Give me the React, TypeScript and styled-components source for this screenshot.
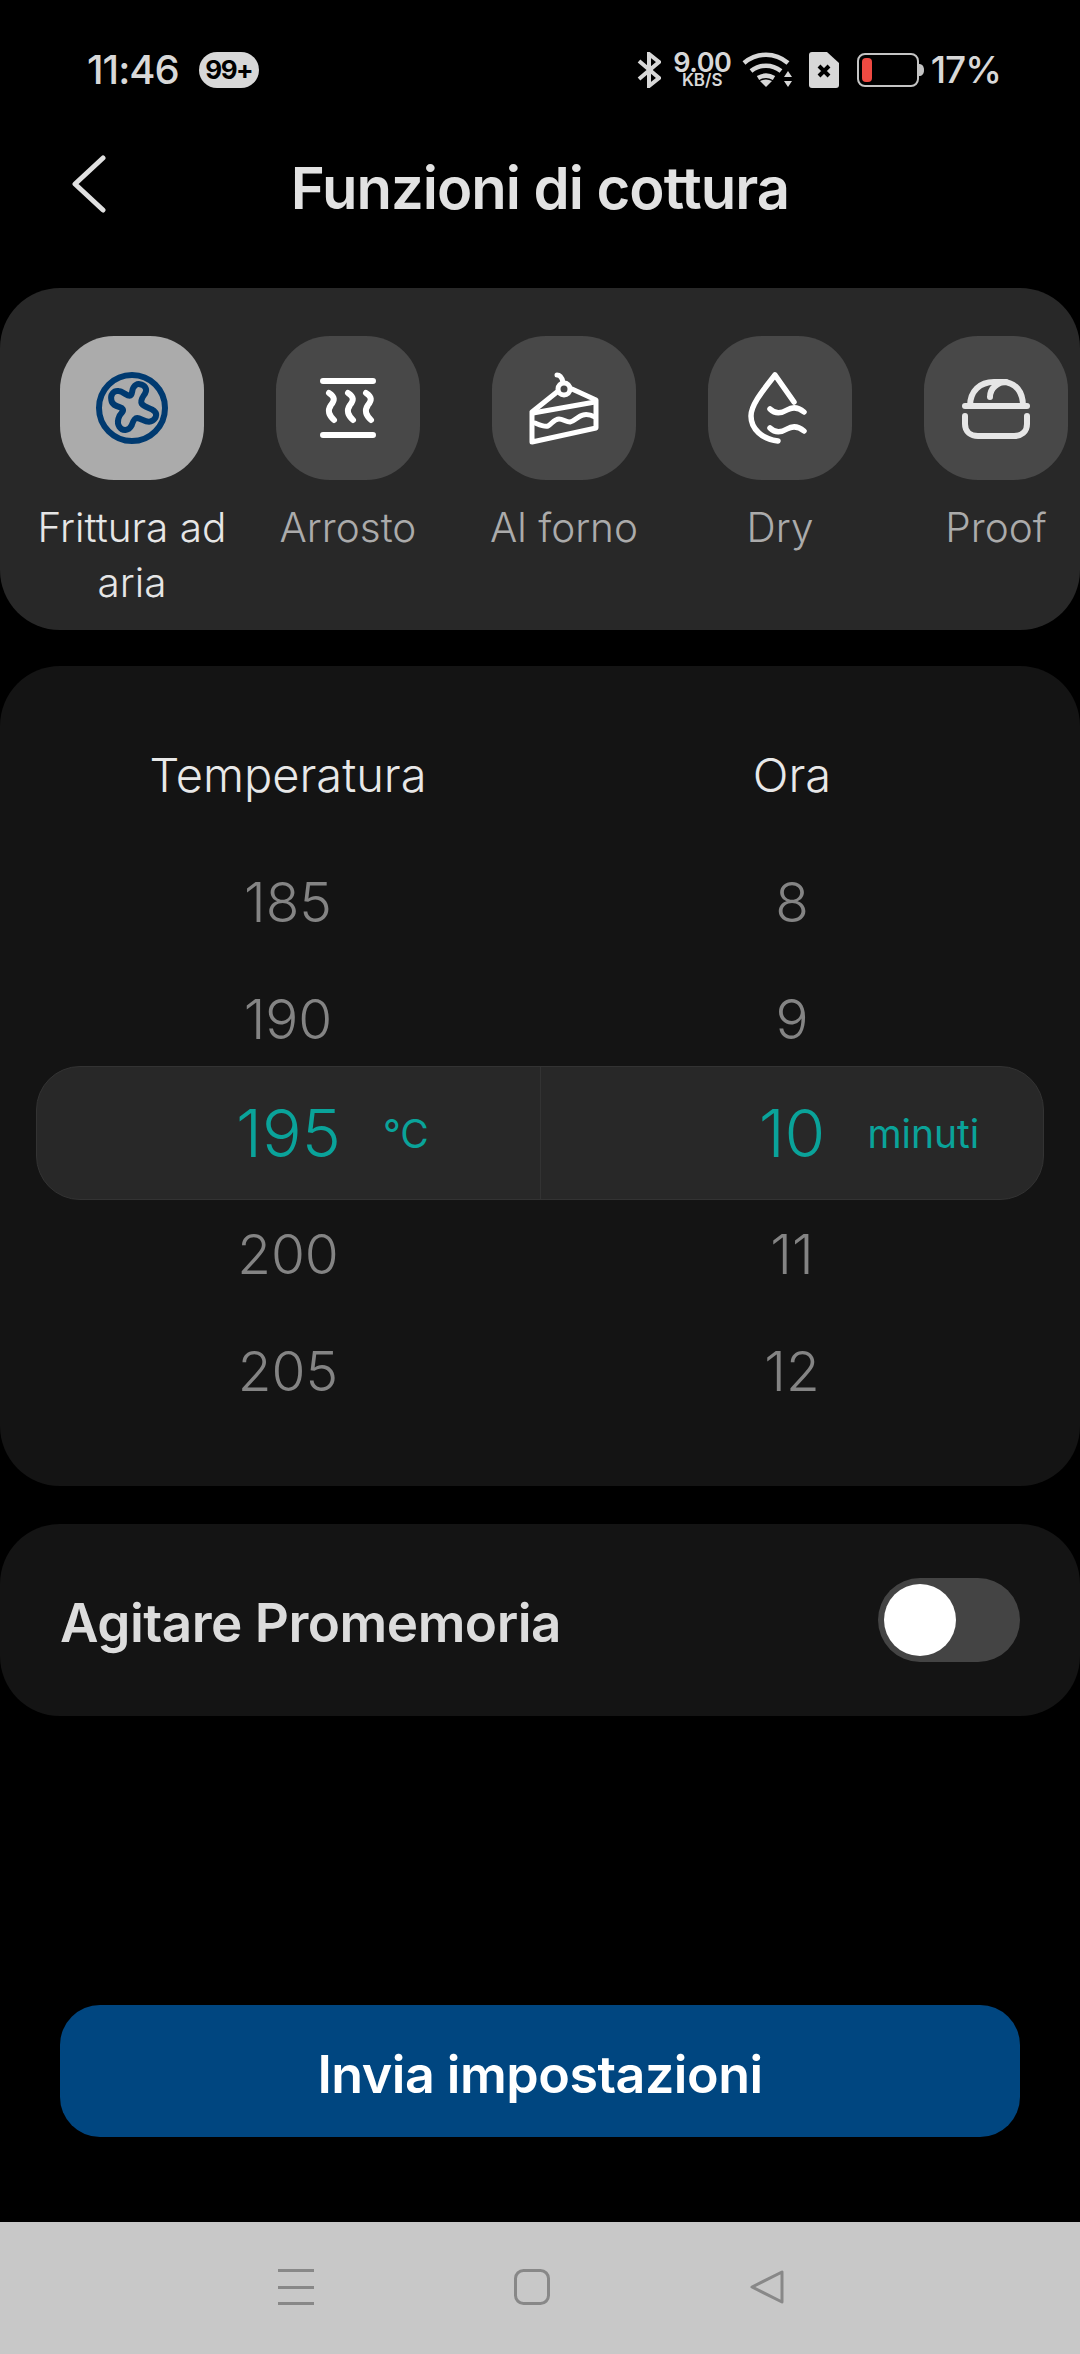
import React from "react";
import styled, { createGlobalStyle } from "styled-components";

const GlobalStyle = createGlobalStyle`
  html, body {
    margin: 0;
    padding: 0;
    background: #000;
    overflow: hidden;
  }
  * {
    box-sizing: border-box;
  }
`;

const Page = styled.div`
  width: 1080px;
  height: 2354px;
  display: flex;
  flex-direction: column;
  background: #000;
  font-family: Inter, "Liberation Sans", sans-serif;
`;

const StatusBar = styled.div`
  height: 140px;
  padding: 52px 79px 0 87px;
  display: flex;
  align-items: flex-start;
  color: #d8d8d8;
`;

const Time = styled.span`
  font-size: 40px;
  line-height: 36px;
  font-weight: 500;
  letter-spacing: -1px;
`;

const CountBadge = styled.span`
  margin-left: 20px;
  width: 60px;
  height: 36px;
  border-radius: 18px;
  background: #d8d8d8;
  color: #000;
  font-size: 26px;
  line-height: 36px;
  font-weight: 700;
  text-align: center;
  letter-spacing: -1.5px;
`;

const StatusRight = styled.div`
  margin-left: auto;
  display: flex;
  align-items: flex-start;
`;

const Speed = styled.div`
  margin-left: 12px;
  width: 59px;
  display: flex;
  flex-direction: column;
  align-items: center;
  font-weight: 600;
`;

const SpeedValue = styled.span`
  font-size: 27px;
  line-height: 21px;
  letter-spacing: -0.5px;
`;

const SpeedUnit = styled.span`
  font-size: 17px;
  line-height: 15px;
`;

const BatteryLabel = styled.span`
  margin-left: 7px;
  font-size: 37px;
  line-height: 36px;
  font-weight: 500;
  letter-spacing: -1px;
`;

const Header = styled.div`
  height: 98px;
  padding-bottom: 2px;
  position: relative;
  display: flex;
  align-items: center;
  justify-content: center;
`;

const BackButton = styled.svg`
  position: absolute;
  left: 70px;
  top: 15px;
`;

const Title = styled.h1`
  margin: 0;
  font-size: 58px;
  font-weight: 600;
  color: #e2e2e2;
  letter-spacing: -1px;
`;

const Card = styled.div<{ $bg: string }>`
  background: ${(p) => p.$bg};
  border-radius: 60px;
  overflow: hidden;
`;

const ModesCard = styled(Card)`
  margin-top: 50px;
  height: 342px;
  padding: 48px 0 0 24px;
  display: flex;
`;

const Mode = styled.div`
  flex: 0 0 216px;
  display: flex;
  flex-direction: column;
  align-items: center;
`;

const ModeTile = styled.div<{ $active?: boolean }>`
  width: 144px;
  height: 144px;
  border-radius: 54px;
  background: ${(p) => (p.$active ? "#ababab" : "#484848")};
  display: flex;
  align-items: center;
  justify-content: center;
`;

const ModeLabel = styled.div<{ $active?: boolean }>`
  margin-top: 20px;
  width: 200px;
  text-align: center;
  font-size: 40.5px;
  line-height: 55px;
  font-weight: 300;
  color: ${(p) => (p.$active ? "#e6e6e6" : "#ababab")};
`;

const WheelCard = styled(Card)`
  margin-top: 36px;
  height: 820px;
  padding: 70px 36px 0;
`;

const Columns = styled.div`
  display: grid;
  grid-template-columns: 1fr 1fr;
`;

const TitleRow = styled(Columns)`
  margin-bottom: 29px;
`;

const ColumnTitle = styled.div`
  text-align: center;
  font-size: 47px;
  line-height: 78px;
  font-weight: 300;
  color: #e8e8e8;
`;

const WheelRow = styled(Columns)`
  height: 117px;
  align-items: center;
  text-align: center;
  font-size: 55px;
  font-weight: 300;
  color: #848484;
`;

const SelectedRow = styled(Columns)`
  height: 134px;
  margin: -11px 0 -5px;
  background: #282828;
  border: 1px solid #333;
  border-radius: 44px;
  color: #0aa39a;
`;

const SelectedCell = styled.div<{ $divider?: boolean }>`
  display: grid;
  grid-template-columns: 1fr auto 1fr;
  align-items: center;
  border-left: ${(p) => (p.$divider ? "1px solid #333" : "none")};
`;

const SelectedValue = styled.span`
  grid-column: 2;
  font-size: 66px;
  font-weight: 300;
`;

const Unit = styled.span`
  padding-left: 42px;
  font-size: 39px;
  font-weight: 400;
  white-space: nowrap;
`;

const ReminderCard = styled(Card)`
  margin-top: 38px;
  height: 192px;
  padding: 0 60px;
  display: flex;
  align-items: center;
  justify-content: space-between;
`;

const ReminderLabel = styled.span`
  padding-top: 6px;
  font-size: 53px;
  font-weight: 600;
  color: #dcdcdc;
  letter-spacing: -0.5px;
`;

const Toggle = styled.div`
  width: 142px;
  height: 84px;
  border-radius: 42px;
  background: #444;
  padding: 6px;
`;

const ToggleKnob = styled.div`
  width: 72px;
  height: 72px;
  border-radius: 50%;
  background: #fff;
`;

const SubmitButton = styled.button`
  margin: 289px 60px 0;
  height: 132px;
  padding: 7px 0 0;
  border: 0;
  border-radius: 40px;
  background: #004680;
  color: #fff;
  font-family: inherit;
  font-size: 52px;
  font-weight: 600;
  letter-spacing: -0.5px;
`;

const NavBar = styled.div`
  margin-top: auto;
  height: 132px;
  background: #c8c8c8;
  padding: 47px 0 0 278px;
  display: flex;
  align-items: flex-start;
`;

const NavSquare = styled.svg`
  margin-left: 200px;
`;

const NavBack = styled.svg`
  margin-left: 199px;
`;

const FanIcon = () => (
  <svg width="76" height="76" viewBox="0 0 76 76" fill="none" stroke="#003a70" strokeWidth="6" strokeLinejoin="round">
    <circle cx="38" cy="38" r="33" />
    <path
      transform="rotate(18 38 38)"
      d="M38 13C43 12 47 15 46 20C45 24 43 28 46 31C50 34 56 32 60 34C65 36 64 42 60 45C56 48 50 45 46 46C43 47 43 52 43 55C42 61 36 63 32 60C27 56 28 49 30 45C31 42 29 41 26 41C22 41 18 41 16 37C13 32 15 27 20 26C24 25 29 28 32 27C35 26 32 21 33 18C34 15 36 13 38 13Z"
    />
  </svg>
);

const RoastIcon = () => (
  <svg width="56" height="60" viewBox="0 0 56 60" fill="none" stroke="#fff" strokeWidth="6" strokeLinecap="round">
    <path d="M3 3h50M3 57h50" />
    <path d="M9 15c6 4 6 7 2 12-4 6-2 10 3 15M28 15c6 4 6 7 2 12-4 6-2 10 3 15M46 15c6 4 6 7 2 12-4 6-2 10 3 15" />
  </svg>
);

const CakeIcon = () => (
  <svg width="72" height="76" viewBox="28 20 72 76" fill="none" stroke="#fff" strokeWidth="5" strokeLinecap="round" strokeLinejoin="round">
    <path d="M32 62v30l64-14V50L72 39M57 42L32 62" />
    <path d="M33 63l62-11" />
    <path d="M35 73c5 2 9 4 13 3 4-2 6-7 11-7 4 0 7 3 11 3 5-1 8-6 13-7 4-1 8 0 12 2" />
    <circle cx="64" cy="39" r="6" />
    <path d="M57 25c3 0 5 3 6 7" />
  </svg>
);

const DryIcon = () => (
  <svg width="64" height="72" viewBox="0 0 64 72" fill="none" stroke="#fff" strokeWidth="5.5" strokeLinecap="round" strokeLinejoin="round">
    <path d="M30 69C14 67 3 57 3 44 3 32 17 16 27 3l19 27" />
    <path d="M22 37c6 6 12 4 17 1s11-3 17 2M22 56c6 6 12 4 17 1s11-3 17 2" />
  </svg>
);

const ProofIcon = () => (
  <svg width="68" height="62" viewBox="0 0 68 62" fill="none" stroke="#e6e6e6" strokeWidth="6" strokeLinecap="round" strokeLinejoin="round">
    <path d="M3 29h62" />
    <path d="M8 29C8 14 18 5 32 5h8c14 0 21 10 21 24" />
    <path d="M28 20c0-9 8-15 16-15" />
    <path d="M3 39v8c0 8 6 12 13 12h36c7 0 13-4 13-12v-8" />
  </svg>
);

const modes = [
  { label: "Frittura ad aria", icon: <FanIcon />, active: true },
  { label: "Arrosto", icon: <RoastIcon /> },
  { label: "Al forno", icon: <CakeIcon /> },
  { label: "Dry", icon: <DryIcon /> },
  { label: "Proof", icon: <ProofIcon /> },
];

const App = () => {
  return (
    <Page>
      <GlobalStyle />
      <StatusBar>
        <Time>11:46</Time>
        <CountBadge>99+</CountBadge>
        <StatusRight>
          <svg width="24" height="36" viewBox="0 0 24 36" fill="none" stroke="#d8d8d8" strokeWidth="4">
            <path d="M2 9l20 17-10 8V2l10 8L2 27" />
          </svg>
          <Speed>
            <SpeedValue>9.00</SpeedValue>
            <SpeedUnit>KB/S</SpeedUnit>
          </Speed>
          <svg width="52" height="36" viewBox="0 0 52 36" fill="none" stroke="#d8d8d8" strokeWidth="4.5" style={{ marginLeft: 10 }}>
            <path d="M2 11c13-11 31-11 44 0M9 19c9-7 21-7 30 0M16 26c5-3 11-3 16 0" />
            <path d="M24 35l-6-6c4-2 8-2 12 0z" fill="#d8d8d8" stroke="none" />
            <path d="M46 19l4 6h-8zM46 35l-4-6h8z" fill="#d8d8d8" stroke="none" />
          </svg>
          <svg width="30" height="36" viewBox="0 0 30 36" style={{ marginLeft: 15 }}>
            <path d="M3 0h15l12 11v22a3 3 0 0 1-3 3H3a3 3 0 0 1-3-3V3a3 3 0 0 1 3-3z" fill="#d8d8d8" />
            <path d="M10 14l10 10M20 14L10 24" stroke="#000" strokeWidth="4" />
          </svg>
          <svg width="67" height="36" viewBox="0 0 67 36" style={{ marginLeft: 18 }}>
            <rect x="1" y="2" width="60" height="32" rx="7" fill="none" stroke="#c4c4c4" strokeWidth="2" />
            <rect x="5" y="6" width="10" height="24" rx="4" fill="#ee4a42" />
            <path d="M62 12c3 0 5 2 5 6s-2 6-5 6z" fill="#c4c4c4" />
          </svg>
          <BatteryLabel>17%</BatteryLabel>
        </StatusRight>
      </StatusBar>

      <Header>
        <BackButton width="36" height="58" viewBox="0 0 36 58" fill="none" stroke="#e0e0e0" strokeWidth="5" strokeLinecap="round" strokeLinejoin="round">
          <path d="M33 3L5 29l28 26" />
        </BackButton>
        <Title>Funzioni di cottura</Title>
      </Header>

      <ModesCard $bg="#282828">
        {modes.map((m) => (
          <Mode key={m.label}>
            <ModeTile $active={m.active}>{m.icon}</ModeTile>
            <ModeLabel $active={m.active}>{m.label}</ModeLabel>
          </Mode>
        ))}
      </ModesCard>

      <WheelCard $bg="#141414">
        <TitleRow>
          <ColumnTitle>Temperatura</ColumnTitle>
          <ColumnTitle>Ora</ColumnTitle>
        </TitleRow>
        <WheelRow>
          <span>185</span>
          <span>8</span>
        </WheelRow>
        <WheelRow>
          <span>190</span>
          <span>9</span>
        </WheelRow>
        <SelectedRow>
          <SelectedCell>
            <SelectedValue>195</SelectedValue>
            <Unit>°C</Unit>
          </SelectedCell>
          <SelectedCell $divider>
            <SelectedValue>10</SelectedValue>
            <Unit>minuti</Unit>
          </SelectedCell>
        </SelectedRow>
        <WheelRow>
          <span>200</span>
          <span>11</span>
        </WheelRow>
        <WheelRow>
          <span>205</span>
          <span>12</span>
        </WheelRow>
      </WheelCard>

      <ReminderCard $bg="#141414">
        <ReminderLabel>Agitare Promemoria</ReminderLabel>
        <Toggle>
          <ToggleKnob />
        </Toggle>
      </ReminderCard>

      <SubmitButton>Invia impostazioni</SubmitButton>

      <NavBar>
        <svg width="36" height="38" viewBox="0 0 36 38" fill="#888">
          <rect y="0" width="36" height="3" />
          <rect y="17" width="36" height="3" />
          <rect y="33" width="36" height="3" />
        </svg>
        <NavSquare width="36" height="36" viewBox="0 0 36 36" fill="none" stroke="#888" strokeWidth="3">
          <rect x="1.5" y="1.5" width="33" height="33" rx="8" />
        </NavSquare>
        <NavBack width="36" height="36" viewBox="0 0 36 36" fill="none" stroke="#888" strokeWidth="3" strokeLinejoin="round">
          <path d="M33 3v30L3 18z" />
        </NavBack>
      </NavBar>
    </Page>
  );
};

export default App;
